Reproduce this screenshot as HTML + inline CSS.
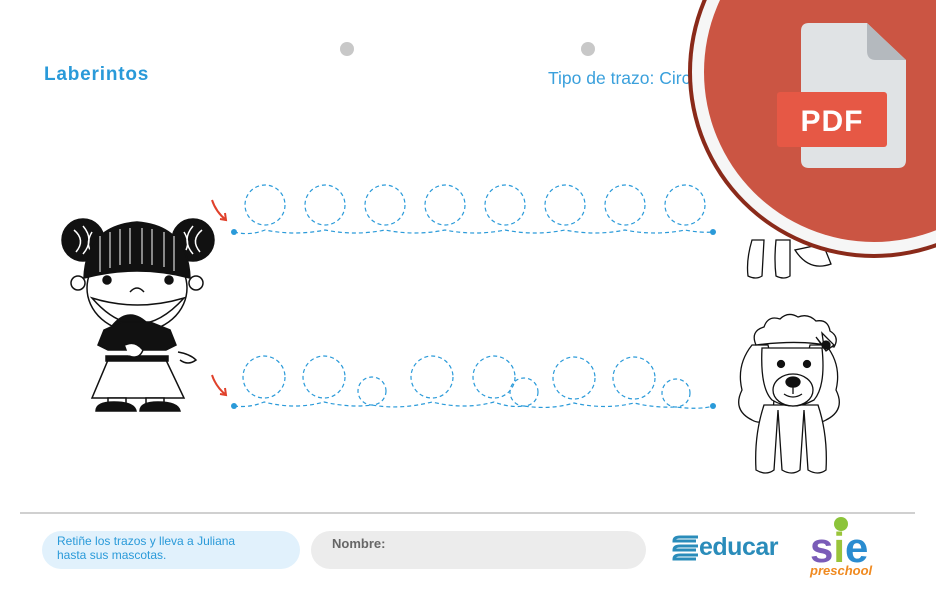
<!DOCTYPE html>
<html><head><meta charset="utf-8"><style>
body{margin:0;width:936px;height:612px;overflow:hidden;background:#fff;font-family:"Liberation Sans",sans-serif;position:relative}
.abs{position:absolute}
</style></head><body>
<div class="abs" style="left:44px;top:64px;font-size:19px;font-weight:bold;color:#2a9ad9;letter-spacing:0.8px">Laberintos</div>
<div class="abs" style="left:548px;top:68px;font-size:17.5px;color:#3aa0dc">Tipo de trazo: Circulares</div>
<div class="abs" style="left:340px;top:42px;width:14px;height:14px;border-radius:50%;background:#c8c8c8"></div>
<div class="abs" style="left:581px;top:42px;width:14px;height:14px;border-radius:50%;background:#c8c8c8"></div>

<svg class="abs" style="left:0;top:0" width="936" height="612">
<g fill="none" stroke="#2a9ad9" stroke-width="1.2" stroke-dasharray="4 3">
<circle cx="265" cy="205" r="20"/><circle cx="325" cy="205" r="20"/><circle cx="385" cy="205" r="20"/><circle cx="445" cy="205" r="20"/><circle cx="505" cy="205" r="20"/><circle cx="565" cy="205" r="20"/><circle cx="625" cy="205" r="20"/><circle cx="685" cy="205" r="20"/>
<path d="M234 232 Q250 236 265 230 Q295 236 325 230 Q355 236 385 230 Q415 236 445 230 Q475 236 505 230 Q535 236 565 230 Q595 236 625 230 Q655 236 685 230 Q700 233 713 232"/>
<circle cx="264" cy="377" r="21"/><circle cx="324" cy="377" r="21"/><circle cx="372" cy="391" r="14"/><circle cx="432" cy="377" r="21"/><circle cx="494" cy="377" r="21"/><circle cx="524" cy="392" r="14"/><circle cx="574" cy="378" r="21"/><circle cx="634" cy="378" r="21"/><circle cx="676" cy="393" r="14"/>
<path d="M234 406 Q250 408 264 402 Q295 410 324 402 Q350 408 372 405 Q400 410 432 402 Q465 410 494 402 Q510 408 524 406 Q550 410 574 403 Q605 410 634 403 Q655 408 676 407 Q700 410 713 406"/>
</g>
<g fill="#2a9ad9"><circle cx="234" cy="232" r="3"/><circle cx="713" cy="232" r="3"/><circle cx="234" cy="406" r="3"/><circle cx="713" cy="406" r="3"/></g>
<g fill="none" stroke="#e0412b" stroke-width="2"><path d="M212 200 Q216 212 226 220 M220 219 L226 220 L225 213"/><path d="M212 375 Q216 387 226 395 M220 394 L226 395 L225 388"/></g>

<!-- girl -->
<g stroke="#111" stroke-width="1.5">
<circle cx="83" cy="240" r="21" fill="#111"/><circle cx="193" cy="240" r="21" fill="#111"/>
<path d="M83 226 q12 14 0 28 M74 230 q12 10 2 22 M92 232 q-6 10 -2 18" stroke="#fff" fill="none"/>
<path d="M193 226 q-12 14 0 28 M202 230 q-12 10 -2 22 M184 232 q6 10 2 18" stroke="#fff" fill="none"/>
<ellipse cx="137" cy="288" rx="50" ry="44" fill="#fff"/>
<path d="M84 278 Q86 226 137 222 Q188 226 190 278 Q137 264 84 278Z" fill="#111"/>
<path d="M100 236 v36 M110 232 v36 M120 229 v36 M130 228 v36 M142 228 v36 M152 229 v36 M164 232 v35 M174 236 v35" stroke="#fff" stroke-width="1"/>
<circle cx="78" cy="283" r="7" fill="#fff"/><circle cx="196" cy="283" r="7" fill="#fff"/>
<circle cx="107" cy="280" r="4" fill="#111"/><circle cx="169" cy="280" r="4" fill="#111"/>
<path d="M130 292 q7 -8 14 0" fill="none"/>
<path d="M92 298 Q137 350 184 298 Q137 312 92 298Z" fill="#fff"/>
<path d="M112 326 q18 -22 38 0 Z" fill="#111"/>
<path d="M108 360 L166 360 L184 398 L92 398Z" fill="#fff"/>
<path d="M104 330 L122 322 L150 322 L170 330 L176 345 L166 350 L108 350 L98 345Z" fill="#111"/>
<rect x="106" y="356" width="62" height="5" fill="#111"/>
<rect x="108" y="398" width="18" height="6" fill="#fff"/><rect x="146" y="398" width="18" height="6" fill="#fff"/>
<path d="M96 411 q0 -9 18 -9 q20 0 22 9Z M140 411 q0 -9 18 -9 q20 0 22 9Z" fill="#111"/>
<path d="M178 352 q12 2 18 8 q-8 6 -16 0" fill="#fff"/>
<path d="M125 345 q10 -5 18 5 q-4 10 -14 6" fill="#fff"/>
</g>

<!-- poodle -->
<g stroke="#111" stroke-width="1.3" fill="#fff">
<path d="M752 345 q-16 20 -10 45 q-10 20 10 30 q10 6 20 -5 q6 -30 -4 -70Z"/>
<path d="M826 345 q16 20 10 45 q10 20 -10 30 q-10 6 -20 -5 q-6 -30 4 -70Z"/>
<path d="M764 405 q-10 30 -8 65 q10 6 18 0 l4 -60 l4 60 q10 6 18 0 l4 -60 l4 60 q10 6 18 0 q2 -35 -8 -65Z"/>
<path d="M762 348 q-2 40 10 52 q20 12 42 0 q12 -14 8 -52Z"/>
<path d="M756 345 q-6 -14 8 -18 q4 -12 16 -8 q8 -8 18 -2 q10 -4 18 4 q12 -2 14 10 q10 6 4 16 q-30 -8 -78 -2Z"/>
<ellipse cx="793" cy="390" rx="20" ry="16"/>
<circle cx="781" cy="364" r="3.5" fill="#111"/><circle cx="807" cy="364" r="3.5" fill="#111"/>
<ellipse cx="793" cy="382" rx="7" ry="5" fill="#111"/>
<path d="M793 386 v8 M784 394 q9 6 18 0" fill="none"/>
<path d="M816 337 l8 10 l-2 -14 l12 12 l-8 6Z" fill="#fff"/><circle cx="826" cy="345" r="4" fill="#111"/>
</g>
<g stroke="#111" stroke-width="1.3" fill="#fff">
<path d="M752 240 q-6 20 -4 36 q8 4 14 0 l2 -36Z M776 240 q-2 20 0 36 q8 4 14 0 l0 -36Z"/>
<path d="M795 250 q14 22 36 14 l-8 -20Z"/>
<ellipse cx="818" cy="240" rx="10" ry="6" fill="#111"/>
</g>

<!-- PDF circle -->
<circle cx="874" cy="72" r="186" fill="#8a2a1a"/>
<circle cx="874" cy="72" r="182" fill="#f6f6f6"/>
<circle cx="874" cy="72" r="170" fill="#cb5543"/>
<path d="M801 23 h66 l39 37 v100 q0 8 -8 8 h-89 q-8 0 -8 -8 v-129 q0 -8 8 -8Z" fill="#e0e3e5"/>
<path d="M867 23 l39 37 h-30 q-9 0 -9 -9Z" fill="#b4b9be"/>
<rect x="777" y="92" width="110" height="55" rx="3" fill="#e65845"/>
<text x="832" y="131" font-family="Liberation Sans,sans-serif" font-size="30" font-weight="bold" fill="#fff" text-anchor="middle" letter-spacing="1">PDF</text>

<line x1="20" y1="513" x2="915" y2="513" stroke="#c0c0c0" stroke-width="1.5"/>
</svg>

<div class="abs" style="left:42px;top:531px;width:258px;height:38px;border-radius:19px;background:#e1f1fc"></div>
<div class="abs" style="left:57px;top:534px;font-size:12px;line-height:14px;color:#2a9ad9">Retiñe los trazos y lleva a Juliana<br>hasta sus mascotas.</div>
<div class="abs" style="left:311px;top:531px;width:335px;height:38px;border-radius:19px;background:#ececec"></div>
<div class="abs" style="left:332px;top:536px;font-size:13px;font-weight:bold;color:#666">Nombre:</div>

<svg class="abs" style="left:672px;top:533px" width="28" height="32"><g fill="none" stroke="#2a8cba" stroke-width="3"><path d="M26 4 h-18 q-6 0 -6 4 h22"/><path d="M26 13 h-18 q-6 0 -6 4 h22"/><path d="M26 22 h-18 q-6 0 -6 4 h22"/></g></svg>
<div class="abs" style="left:699px;top:533px;font-size:25px;font-weight:bold;color:#2a8cba;letter-spacing:-0.5px">educar</div>

<div class="abs" style="left:810px;top:526px;font-size:42px;font-weight:bold;line-height:44px;color:#7a5cb8">s<span style="color:#9ac43a">i</span><span style="color:#2a8cd0">e</span></div>
<div class="abs" style="left:834px;top:517px;width:14px;height:14px;border-radius:50%;background:#8cc43a"></div>
<div class="abs" style="left:810px;top:563px;font-size:13px;font-weight:bold;color:#f08a20;font-style:italic">preschool</div>
</body></html>
